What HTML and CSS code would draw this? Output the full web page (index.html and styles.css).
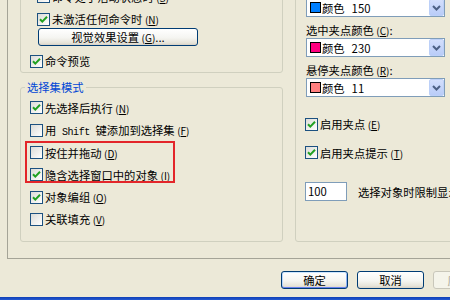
FILE: index.html
```html
<!DOCTYPE html>
<html lang="zh-CN">
<head>
<meta charset="utf-8">
<title>选项</title>
<link rel="stylesheet" href="styles.css">
</head>
<body>
<div class="dialog">
  <div class="tab">
    <div class="col-left">
      <fieldset class="group">
        <div class="rows-top">
          <div class="row sub"><span class="cb"><svg viewBox="0 0 11 11" width="11" height="11"><path d="M2 5.2 L4.3 7.6 L9 2.8" fill="none" stroke="#21A121" stroke-width="2"/></svg></span><span>命令处于活动状态时 <span class="key">(<u>S</u>)</span></span></div>
          <div class="row sub r2"><span class="cb"><svg viewBox="0 0 11 11" width="11" height="11"><path d="M2 5.2 L4.3 7.6 L9 2.8" fill="none" stroke="#21A121" stroke-width="2"/></svg></span><span>未激活任何命令时 <span class="key">(<u>N</u>)</span></span></div>
          <button class="btn btn-wide" type="button">视觉效果设置 <span class="key">(<u>G</u>)</span>...</button>
          <div class="row r3"><span class="cb"><svg viewBox="0 0 11 11" width="11" height="11"><path d="M2 5.2 L4.3 7.6 L9 2.8" fill="none" stroke="#21A121" stroke-width="2"/></svg></span><span>命令预览</span></div>
        </div>
      </fieldset>
      <fieldset class="group group-sel">
        <legend>选择集模式</legend>
        <div class="rows">
          <div class="row"><span class="cb"><svg viewBox="0 0 11 11" width="11" height="11"><path d="M2 5.2 L4.3 7.6 L9 2.8" fill="none" stroke="#21A121" stroke-width="2"/></svg></span><span>先选择后执行 <span class="key">(<u>N</u>)</span></span></div>
          <div class="row"><span class="cb"></span><span>用<span class="mono"> Shift </span>键添加到选择集 <span class="key">(<u>F</u>)</span></span></div>
          <div class="row"><span class="cb"></span><span>按住并拖动 <span class="key">(<u>D</u>)</span></span></div>
          <div class="row"><span class="cb"><svg viewBox="0 0 11 11" width="11" height="11"><path d="M2 5.2 L4.3 7.6 L9 2.8" fill="none" stroke="#21A121" stroke-width="2"/></svg></span><span>隐含选择窗口中的对象 <span class="key">(<u>I</u>)</span></span></div>
          <div class="row"><span class="cb"><svg viewBox="0 0 11 11" width="11" height="11"><path d="M2 5.2 L4.3 7.6 L9 2.8" fill="none" stroke="#21A121" stroke-width="2"/></svg></span><span>对象编组 <span class="key">(<u>O</u>)</span></span></div>
          <div class="row"><span class="cb"></span><span>关联填充 <span class="key">(<u>V</u>)</span></span></div>
          <div class="mark"></div>
        </div>
      </fieldset>
    </div>
    <fieldset class="group">
      <div class="grip">
        <div class="combo"><span class="swatch sw-150"></span><span>颜色</span><span class="num">150</span><span class="drop"><svg viewBox="0 0 9 6" width="9" height="6"><path d="M1 1 L4.5 4.5 L8 1" fill="none" stroke="#4D6185" stroke-width="2"/></svg></span></div>
        <div class="label">选中夹点颜色 <span class="key">(<u>C</u>)</span>:</div>
        <div class="combo"><span class="swatch sw-230"></span><span>颜色</span><span class="num">230</span><span class="drop"><svg viewBox="0 0 9 6" width="9" height="6"><path d="M1 1 L4.5 4.5 L8 1" fill="none" stroke="#4D6185" stroke-width="2"/></svg></span></div>
        <div class="label">悬停夹点颜色 <span class="key">(<u>R</u>)</span>:</div>
        <div class="combo"><span class="swatch sw-11"></span><span>颜色</span><span class="num">11</span><span class="drop"><svg viewBox="0 0 9 6" width="9" height="6"><path d="M1 1 L4.5 4.5 L8 1" fill="none" stroke="#4D6185" stroke-width="2"/></svg></span></div>
        <div class="row g1"><span class="cb"><svg viewBox="0 0 11 11" width="11" height="11"><path d="M2 5.2 L4.3 7.6 L9 2.8" fill="none" stroke="#21A121" stroke-width="2"/></svg></span><span>启用夹点 <span class="key">(<u>E</u>)</span></span></div>
        <div class="row g2"><span class="cb"><svg viewBox="0 0 11 11" width="11" height="11"><path d="M2 5.2 L4.3 7.6 L9 2.8" fill="none" stroke="#21A121" stroke-width="2"/></svg></span><span>启用夹点提示 <span class="key">(<u>T</u>)</span></span></div>
        <div class="limit"><span class="input">100</span><span>选择对象时限制显示的夹点数 <span class="key">(<u>M</u>)</span></span></div>
      </div>
    </fieldset>
  </div>
  <div class="buttons">
    <button class="btn btn-default" type="button">确定</button>
    <button class="btn" type="button">取消</button>
    <button class="btn btn-disabled" type="button">应用 <span class="key">(<u>A</u>)</span></button>
  </div>
  <div class="taskbar"></div>
</div>
</body>
</html>
```

FILE: styles.css
```css
* { box-sizing: border-box; }
html, body { margin: 0; }
body {
  width: 450px;
  height: 300px;
  overflow: hidden;
  background: #ECE9D8;
  font-family: "Noto Sans CJK SC", "Noto Sans", sans-serif;
  font-size: 11.3px;
  color: #000;
}
.dialog {
  width: 520px;
  display: flex;
  flex-direction: column;
}
.tab {
  margin: -30px 0 0 7px;
  padding: 10px 0 16px 12px;
  border-left: 1px solid #A5A497;
  border-bottom: 1px solid #A5A497;
  display: grid;
  grid-template-columns: 263px 200px;
  column-gap: 12px;
}
.col-left {
  display: flex;
  flex-direction: column;
}
.group {
  margin: 0;
  padding: 0;
  border: 1px solid #D0D0BF;
  border-radius: 3px;
  min-width: 0;
}
.group-sel { margin-top: 7px; }
legend {
  margin-left: 4px;
  padding: 0 2px;
  line-height: 14px;
  color: #0046D5;
}
.rows-top {
  display: flex;
  flex-direction: column;
  align-items: flex-start;
  padding: 5.5px 0 1px 9px;
}
.row {
  display: flex;
  align-items: center;
  height: 20px;
  white-space: nowrap;
}
.rows-top .sub { margin-left: 7px; }
.rows-top .r2 { margin-top: 2.5px; }
.rows-top .r3 { margin-top: 5px; }
.rows {
  position: relative;
  padding: 2.85px 0 10.35px 9px;
}
.rows .row { height: 22.3px; }
.cb {
  width: 13px;
  height: 13px;
  flex: none;
  margin-right: 2px;
  border: 1px solid #1C5180;
  background: linear-gradient(135deg, #DCDCD7, #FFFFFF);
  display: flex;
  align-items: center;
  justify-content: center;
}
.cb svg { display: block; }
.key { font-size: 10px; }
.mono {
  font-family: "Liberation Mono", monospace;
  font-size: 10px;
  letter-spacing: -0.4px;
  white-space: pre;
}
.mark {
  position: absolute;
  left: 4px;
  top: 47px;
  width: 150px;
  height: 42px;
  border: 2px solid #E3262A;
}
.btn {
  font: inherit;
  height: 18px;
  padding: 0;
  line-height: 16px;
  color: #000;
  border: 1px solid #003C74;
  border-radius: 3px;
  background: linear-gradient(#FFFFFF, #F5F5F1 55%, #E6E3D8 88%, #D6D0C5);
  white-space: nowrap;
}
.btn-wide {
  width: 160px;
  margin: -1px 0 0 8px;
}
.grip {
  display: flex;
  flex-direction: column;
  align-items: flex-start;
  padding: 17px 0 0 10px;
}
.combo {
  width: 139px;
  height: 19px;
  border: 1px solid #7F9DB9;
  background: #FFFFFF;
  display: flex;
  align-items: center;
  padding-left: 3px;
  white-space: nowrap;
}
.swatch {
  width: 11px;
  height: 11px;
  border: 1px solid #000;
  margin-right: 1px;
  flex: none;
}
.sw-150 { background: #007FFF; }
.sw-230 { background: #FF007F; }
.sw-11 { background: #FF7F7F; }
.num { margin-left: 7px; }
.drop {
  margin-left: auto;
  width: 15px;
  height: 17px;
  border: 1px solid #BCD0F8;
  border-radius: 2px;
  background: linear-gradient(#D3DFFC, #B9CCF8);
  display: flex;
  align-items: center;
  justify-content: center;
}
.drop svg { display: block; }
.label {
  height: 14px;
  line-height: 14px;
  margin: 6px 0 1px;
  white-space: nowrap;
}
.grip .row { height: 22px; margin-left: -1px; }
.grip .g1 { margin-top: 16px; }
.grip .g2 { margin-top: 6.5px; }
.limit {
  margin: 18.5px 0 0 -1px;
  display: flex;
  align-items: center;
  gap: 11px;
  white-space: nowrap;
}
.input {
  width: 42px;
  height: 19px;
  line-height: 17px;
  border: 1px solid #7F9DB9;
  background: #FFFFFF;
  padding-left: 2px;
}
.buttons {
  margin-top: 12px;
  padding-right: 20px;
  display: flex;
  justify-content: flex-end;
  gap: 9px;
}
.buttons .btn { width: 67px; }
.btn-default {
  box-shadow: inset 0 1px 0 #CEE7FF, inset 0 -1px 0 #6982EE, inset 1px 0 0 #B8D6FB, inset -1px 0 0 #8FB3F7;
}
.btn-disabled {
  color: #ACA899;
  border-color: #C9C7BA;
  background: #F5F4EA;
}
.taskbar {
  margin-top: 8px;
  height: 10px;
  background: linear-gradient(#0F3FB5, #2A62DC 40%, #3575EC);
}
```
